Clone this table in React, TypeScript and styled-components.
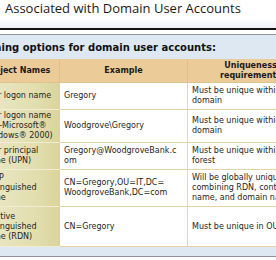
import React from 'react';
import styled, { createGlobalStyle } from 'styled-components';

const GlobalStyle = createGlobalStyle`
  html, body {
    margin: 0;
    padding: 0;
    background: #ffffff;
  }
`;

type Row = {
  name: React.ReactNode;
  example: React.ReactNode;
  rule: React.ReactNode;
  height: number;
};

const rows: Row[] = [
  {
    name: 'User logon name',
    example: 'Gregory',
    rule: <>Must be unique within<br />domain</>,
    height: 27,
  },
  {
    name: <>User logon name<br />(pre-Microsoft®<br />Windows® 2000)</>,
    example: 'Woodgrove\\Gregory',
    rule: <>Must be unique within<br />domain</>,
    height: 33,
  },
  {
    name: <>User principal<br />name (UPN)</>,
    example: <>Gregory@WoodgroveBank.c<br />om</>,
    rule: <>Must be unique within<br />forest</>,
    height: 27,
  },
  {
    name: <>LDAP<br />distinguished<br />name</>,
    example: <>CN=Gregory,OU=IT,DC=<br />WoodgroveBank,DC=com</>,
    rule: <>Will be globally unique by<br />combining RDN, container<br />name, and domain name</>,
    height: 37,
  },
  {
    name: <>Relative<br />distinguished<br />name (RDN)</>,
    example: 'CN=Gregory',
    rule: 'Must be unique in OU',
    height: 40,
  },
];

const App: React.FC = () => {
  return (
    <>
      <GlobalStyle />
      <Page>
        <TitleBar>
          <Title>Associated with Domain User Accounts</Title>
        </TitleBar>
        <Rule />
        <Frame>
          <Caption>Naming options for domain user accounts:</Caption>
          <Table $rows={[24, ...rows.map((r) => r.height)]}>
            <HeadCell>Object Names</HeadCell>
            <HeadCell>Example</HeadCell>
            <HeadCell>Uniqueness<br />requirements</HeadCell>
            {rows.map((r, i) => (
              <React.Fragment key={i}>
                <NameCell>{r.name}</NameCell>
                <Cell>{r.example}</Cell>
                <Cell>{r.rule}</Cell>
              </React.Fragment>
            ))}
          </Table>
        </Frame>
      </Page>
    </>
  );
};

const Page = styled.div`
  width: 276px;
  height: 260px;
  overflow: hidden;
  background: #ffffff;
  color: #1e1e1e;
`;

const TitleBar = styled.div`
  height: 28px;
  padding-left: 5px;
  background: linear-gradient(to bottom, #ffffff 0%, #ffffff 65%, #eef3f9 100%);
`;

const Title = styled.h1`
  margin: 0;
  font-family: 'Open Sans', 'Noto Sans', sans-serif;
  font-weight: 400;
  font-size: 13px;
  line-height: 17px;
  color: #1a1a1a;
  white-space: nowrap;
`;

const Rule = styled.div`
  height: 2px;
  background: #141414;
  margin-bottom: 4px;
`;

const Frame = styled.div`
  border-top: 1px solid #8e949a;
  border-bottom: 1px solid #8e949a;
  background: #dde8f3;
  padding-bottom: 9px;
`;

const Caption = styled.div`
  height: 24px;
  display: flex;
  align-items: center;
  margin-left: -24px;
  font-family: 'DejaVu Sans', Verdana, sans-serif;
  font-weight: 700;
  font-size: 10px;
  color: #111;
  white-space: nowrap;
`;

const Table = styled.div<{ $rows: number[] }>`
  display: grid;
  grid-template-columns: 81px 128px 126px;
  grid-template-rows: ${(p) => p.$rows.map((h) => `${h}px`).join(' ')};
  margin-left: -21px;
  width: 335px;
  font-family: 'DejaVu Sans', Verdana, sans-serif;
  font-size: 8px;
  line-height: 10px;
`;

const BaseCell = styled.div`
  display: flex;
  align-items: center;
  box-sizing: border-box;
  padding: 0 3px 0 4px;
  border-bottom: 1px solid #e6d2a6;
  border-right: 1px solid #ead8b0;
  white-space: nowrap;
`;

const HeadCell = styled(BaseCell)`
  justify-content: center;
  text-align: center;
  padding: 0 3px;
  font-weight: 700;
  background: #ebcc99;
  border-right-color: #e0bf8a;
  border-bottom-color: #e0c28e;
  color: #1a1a1a;
`;

const NameCell = styled(BaseCell)`
  background: linear-gradient(to right, #ece9c9 0%, #e2deaf 70%, #dad59c 100%);
  border-bottom-color: #f2ecd4;
  border-right-color: #e4cf9c;
`;

const Cell = styled(BaseCell)`
  background: #ffffff;
`;

export default App;
